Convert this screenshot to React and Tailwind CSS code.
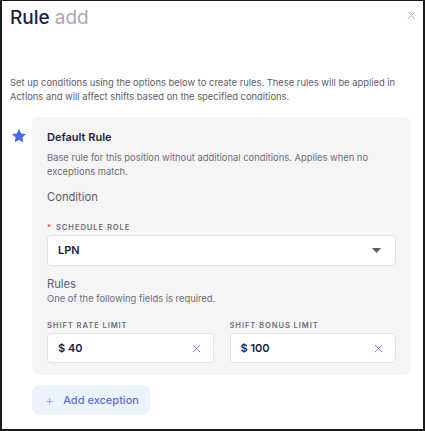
import React from 'react'
import { X } from 'lucide-react'

const Star = () => (
    <svg width="16" height="16" viewBox="0 0 24 24" className="text-[#4a68ec]">
        <path fill="currentColor" d="M12 1.5l3.2 6.7 7.3.9-5.4 5.1 1.4 7.3L12 18l-6.5 3.5 1.4-7.3-5.4-5.1 7.3-.9z" />
    </svg>
)

const Label = ({ children, required }) => (
    <div className="text-[7.6px] font-semibold tracking-[0.12em] text-[#6b6f80] uppercase leading-[10px]">
        {required && <span className="text-[#e5484d] mr-1">*</span>}
        {children}
    </div>
)

const MoneyInput = ({ value }) => (
    <div className="h-[30px] bg-white border border-[#e2e3e8] rounded flex items-center justify-between px-2.5">
        <span className="text-[11px] font-semibold text-[#1f1d3d]">{value}</span>
        <X size={13} strokeWidth={1.6} className="text-[#7b74c9]" />
    </div>
)

const App = () => {
    return (
        <div className="w-[425px] h-[431px] bg-white border-2 border-t border-[#1a1a1a] overflow-hidden relative" style={{ fontFamily: 'Inter, "Noto Sans", sans-serif' }}>
            <X size={13} strokeWidth={1.5} className="absolute right-[5px] top-[8px] text-[#a3a6b2]" />

            <h1 className="pl-2 pt-[5px] text-[19px] leading-6 font-medium text-[#1f1d4a]">
                Rule <span className="text-[#a7a9b8] font-normal">add</span>
            </h1>

            <p className="pl-2 pr-3 mt-[46px] text-[9.4px] leading-[14px] text-[#5b5e6d]">
                Set up conditions using the options below to create rules. These rules will be applied in Actions and will affect shifts based on the specified conditions.
            </p>

            <div className="flex mt-[13px]">
                <div className="w-[30px] pl-[9px] pt-[11px] flex-shrink-0">
                    <Star />
                </div>
                <div className="w-[379px] bg-[#f5f5f6] rounded-lg px-[15px] pt-[12px] pb-[12px]">
                    <h2 className="text-[11px] font-semibold text-[#23214a] leading-4">Default Rule</h2>
                    <p className="mt-[6px] text-[9.4px] leading-[14px] text-[#6a6d7c] pr-4">
                        Base rule for this position without additional conditions. Applies when no exceptions match.
                    </p>
                    <div className="mt-[10px] text-[11.2px] text-[#5a5d6c] leading-4">Condition</div>

                    <div className="mt-[18px]">
                        <Label required>Schedule Role</Label>
                        <div className="mt-[2px] h-[31px] bg-white border border-[#e2e3e8] rounded flex items-center justify-between px-2.5">
                            <span className="text-[11px] font-semibold text-[#1f1d3d]">LPN</span>
                            <svg width="9" height="5" viewBox="0 0 9 5" className="mr-1">
                                <path d="M0 0h9L4.5 5z" fill="#5c5f6b" />
                            </svg>
                        </div>
                    </div>

                    <div className="mt-[10px] text-[11.2px] text-[#5a5d6c] leading-4">Rules</div>
                    <div className="text-[9.4px] text-[#6a6d7c] leading-[13px]">One of the following fields is required.</div>

                    <div className="mt-[16px] grid grid-cols-2 gap-4">
                        <div>
                            <Label>Shift Rate Limit</Label>
                            <div className="mt-[2px]"><MoneyInput value="$ 40" /></div>
                        </div>
                        <div>
                            <Label>Shift Bonus Limit</Label>
                            <div className="mt-[2px]"><MoneyInput value="$ 100" /></div>
                        </div>
                    </div>
                </div>
            </div>

            <div className="ml-[30px] mt-[10px] w-[118px] h-[30px] bg-[#edf3fd] rounded-lg flex items-center pl-[13px] gap-[9px] text-[#5670d9]">
                <span className="text-[14px] font-light leading-none text-[#8da0e6]">+</span>
                <span className="text-[11px] font-medium">Add exception</span>
            </div>
        </div>
    )
}

export default App
